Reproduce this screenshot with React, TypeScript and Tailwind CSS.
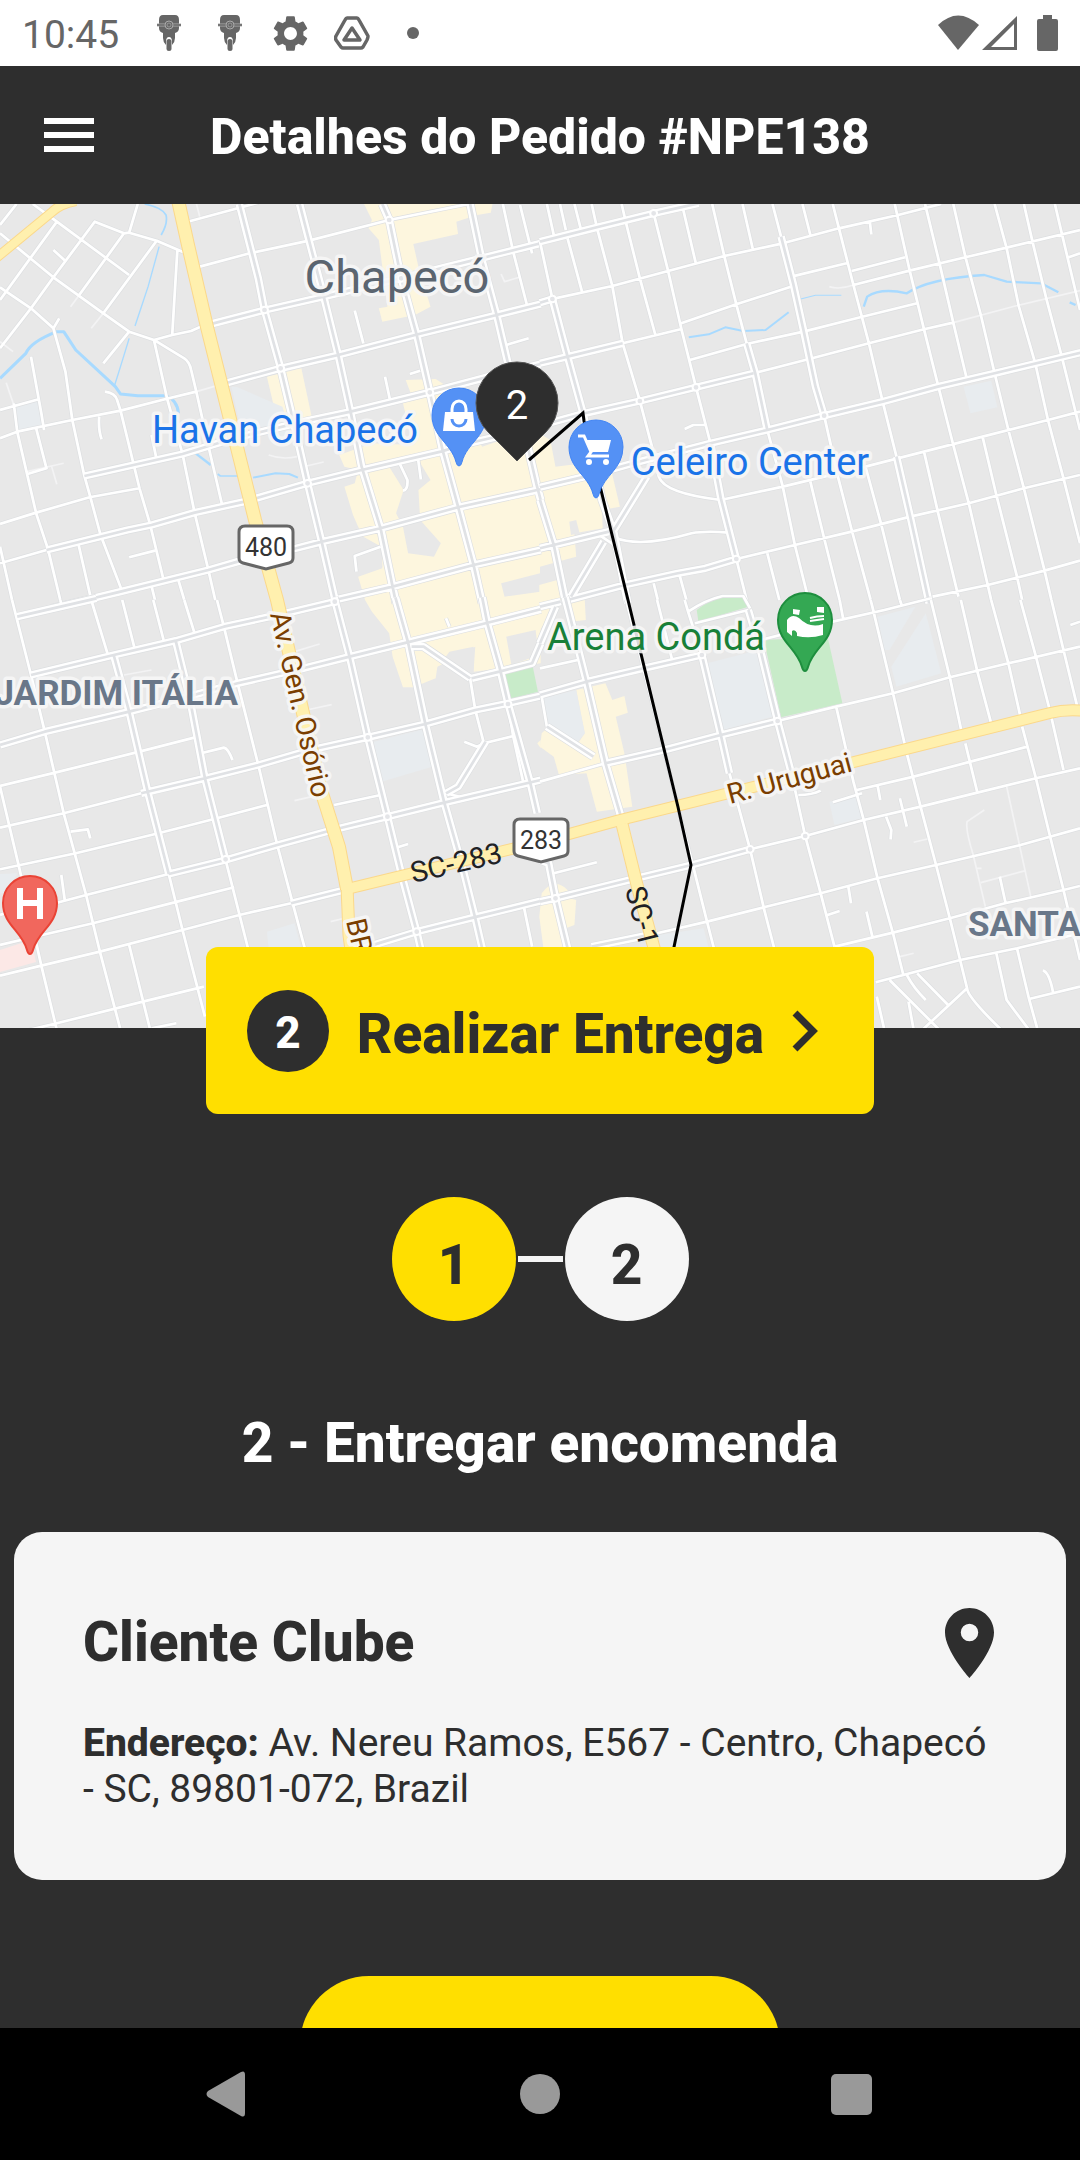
import React from "react";
import { MdSettings } from "react-icons/md";

type Tile = {
  transform: string;
  commercial: string[];
  holes: string[];
  blocks: string[];
  parks: string[];
  avenues: string[];
  streets: string[];
  faint: string[];
  rivers: { d: string; w: number }[];
  rings: [number, number][];
};

const tiles: Tile[] = [
  {
    transform: "translate(0 200) scale(0.3444 0.3333)",
    commercial: [
      "M1057 12H1430L1425 38 1385 45 1325 65 1330 102 1200 132 1215 200 1250 320 1205 345 1110 365 1100 325 1125 320 1100 120 1070 85 1080 60Z",
      "M775 530L875 505 905 650 830 665 800 640Z",
      "M1178 540L1265 537 1300 560 1400 740 1568 680V1200H1060L1040 1130 1110 1105V1042L1055 1010 1040 980 1025 945 1000 860 1030 850 1040 810 1000 800 985 765 1080 730 1200 735 1170 610 1200 600Z",
    ],
    holes: [
      "M1130 800L1215 780 1250 840 1215 870 1220 960 1280 1030 1260 1070 1185 1060 1170 980 1150 940 1172 870Z",
      "M1455 1150L1568 1120V1175L1465 1190Z",
      "M1040 1065L1105 1045 1110 1100 1040 1115Z",
    ],
    blocks: ["M672 560L690 562 820 620 850 720 700 690Z", "M45 618L115 600 122 675 52 692Z"],
    parks: [],
    avenues: [
      "M695 12L750 235 768 330 815 505 860 700 893 850 935 1030 975 1210",
      "M870 12L897 120 940 290 982 465 1018 635 1050 800 1105 985 1140 1160 1150 1210",
      "M1110 12L1130 60 1165 235 1210 405 1248 577 1285 750 1330 920 1375 1095 1400 1210",
      "M1365 12L1398 175 1442 345 1475 490 1510 640 1557 850 1570 900",
      "M583 380L770 330 940 290 1165 235 1300 200 1570 130",
      "M625 558L815 505 982 465 1205 405 1442 345 1570 312",
      "M245 828L530 762 680 715 880 665 1018 635 1248 577 1420 530 1570 492",
      "M135 1050L370 990 440 975 565 938 710 905 893 850 1050 810 1280 755 1360 730 1570 680",
      "M150 1225L350 1175 605 1110 690 1085 860 1045 935 1025 1105 985 1330 922 1570 868",
      "M972 1200L1140 1160 1375 1095 1570 1050",
    ],
    streets: [
      "M95 12L165 65 375 225", "M0 100L155 232 300 340 375 395 447 420 500 405 555 393 583 380",
      "M0 262L90 325 155 385 190 515 210 660 245 828 262 890 292 1005 355 1175",
      "M48 12L0 75", "M165 65L0 300", "M400 12L375 98", "M540 160L455 122 375 98 360 100 275 65 155 232 90 325 0 445",
      "M360 100L230 285", "M455 122L300 340", "M375 395L300 490", "M155 150L190 183", "M172 355L155 385",
      "M515 150L500 405", "M447 420L485 595 530 762 565 938 605 1110 625 1200", "M447 420L535 475Q550 485 555 510L570 575 610 760 645 915",
      "M0 630L115 597", "M90 470L120 640 128 690", "M0 715L50 695 210 660 350 632 490 595 570 575", "M40 610L50 695 105 940 140 1050 175 1200",
      "M105 685L135 805 80 822", "M0 972L105 938 260 892 405 865", "M350 632L405 865 435 970 475 1140", "M305 575Q335 580 340 600L350 632",
      "M288 650Q285 690 295 718", "M225 1020L265 1200", "M438 1150L450 1200", "M515 1130L535 1200", "M375 1072L450 1052",
      "M0 1090L135 1050", "M0 1040L35 1200", "M545 65L690 25 750 8", "M580 200L725 160 897 122 1130 60 1370 10",
      "M1030 332L1055 430", "M1118 530L1132 598", "M1190 522L1220 512", "M1460 12L1490 155 1530 315", "M1470 435L1535 415",
      "M1510 15L1545 160", "M1160 790L1183 840Q1185 870 1170 872", "M1213 770L1222 838", "M1035 1115L1030 1068 1105 1040", "M440 705L455 780",
      "M1398 175L1568 130",
    ],
    faint: ["M570 10L580 50", "M230 285L205 320", "M300 340L265 385", "M18 548L40 615", "M570 575L630 557", "M780 765Q820 780 862 770", "M890 798L940 786", "M78 815L185 790", "M150 800L165 853", "M1455 222L1465 245 1508 232", "M0 425L38 455"],
    rivers: [
      { d: "M420 12Q470 22 482 45Q488 70 468 105", w: 5 },
      { d: "M462 140L430 260 392 378", w: 4 },
      { d: "M375 415Q350 500 333 555", w: 4 },
      { d: "M0 535L75 460Q90 425 165 395L185 395 220 450 335 560 350 582 400 587 480 587Q515 600 518 640", w: 9 },
      { d: "M568 760L612 795", w: 7 },
      { d: "M632 822L640 828H690", w: 5 },
      { d: "M735 833L800 820 840 822 865 833", w: 6 },
    ],
    rings: [[1130, 60], [768, 330], [815, 505], [1248, 577], [893, 850], [1165, 235]],
  },
  {
    transform: "translate(540 200) scale(0.3444 0.3333)",
    commercial: [
      "M-2 700L30 720 45 800 200 780 232 920 180 930 182 985 100 1000 105 1070 70 1080 0 1100Z",
      "M-2 1155L50 1140 62 1200H-2Z",
    ],
    holes: ["M85 965L105 960 115 1000 90 1005Z"],
    blocks: ["M1230 560L1310 542 1328 622 1250 640Z"],
    parks: [],
    avenues: [
      "M36 297L80 470 125 640 180 900 215 1000 245 1160 255 1210",
      "M0 125L165 82 330 40 460 10",
      "M0 308L36 297", "M0 490L80 470 240 430", "M-5 678L130 640 290 603 453 562 620 520",
      "M0 862L130 830 270 790 495 730 660 690 825 647 995 605 1155 560 1320 520 1570 458",
      "M0 1045L200 995", "M80 1200L245 1155 400 1120 480 1105 570 1077",
      "M700 110L735 250 765 390 800 560 825 647", "M600 430L625 520 660 690", "M1035 770L1075 950 1130 1210",
      "M495 730L525 895 570 1077", "M0 900L40 1035 75 1210", "M310 830L215 990", "M185 1025L90 1190",
    ],
    streets: [
      "M0 305L210 258 372 213 535 168 705 130 868 85 1040 45 1165 12", "M240 430L408 388", "M620 520L790 475 955 430 1115 388 1200 368",
      "M570 1077L740 1035 905 995 1075 950 1245 910 1405 865 1568 825", "M525 900L705 860 945 800 1115 755 1285 710 1475 660 1568 635",
      "M1140 1190L1300 1155 1465 1112 1568 1082", "M20 12L40 105", "M58 12L75 90", "M100 12L118 85", "M80 115L122 275",
      "M150 12L165 82 210 258 240 430 290 603 325 740 345 830", "M237 12L250 70 290 235 335 405", "M330 40L372 213 410 385 453 562 495 730",
      "M412 12L452 188", "M500 12L535 168 570 313 600 430", "M588 12L618 148", "M675 12L705 130", "M762 12L785 105",
      "M850 12L868 85 910 255 955 430 995 605 1035 770", "M1030 12L1073 210 1115 388 1158 565 1200 735 1245 910 1300 1155 1310 1200",
      "M1118 12L1160 190 1200 368 1240 540", "M1200 12L1235 170 1280 345 1320 520 1360 690 1405 865 1465 1112 1485 1200",
      "M1320 12L1355 145 1390 318 1438 490 1475 660 1520 835 1568 1030", "M1405 12L1430 125 1470 295 1515 470 1568 690", "M1495 12L1515 100 1568 330",
      "M0 125L36 297", "M660 690L705 860 740 1035 780 1200", "M785 845L825 1015 870 1200", "M945 800L990 970 1045 1200", "M1115 755L1155 935 1215 1190",
      "M1285 710L1325 885 1385 1130 1400 1200", "M825 647L865 830 905 990 960 1200", "M410 370L570 313 735 258", "M435 480L600 432 765 395 930 352 1095 310",
      "M730 230L890 190", "M905 213L1060 172", "M910 255L1073 212 1235 172 1355 143 1568 90", "M1535 172L1568 160", "M958 68L962 103",
      "M420 687L445 675 480 675", "M345 830Q360 880 525 900", "M215 1012Q290 1045 440 1000Q480 992 548 998", "M165 1000L215 1035", "M660 1060L695 1200",
      "M405 1125L425 1200", "M330 1150L342 1200", "M570 1077L600 1200",
    ],
    faint: ["M1200 368L1380 318 1568 272", "M840 260Q870 270 910 255"],
    rivers: [
      { d: "M432 412L490 403 538 382 590 393 655 390 722 337", w: 6 },
      { d: "M757 297L800 286 875 286", w: 3 },
      { d: "M940 320L950 290Q990 262 1065 280Q1130 235 1290 225L1355 245 1455 250 1505 277", w: 7 },
      { d: "M1538 307L1555 315", w: 7 },
    ],
    rings: [[36, 297], [330, 40], [290, 603], [453, 562], [825, 647], [570, 1077]],
  },
  {
    transform: "translate(0 600) scale(0.3444 0.3333)",
    commercial: ["M1060 0H1570V190L1375 215 1380 140 1270 200 1265 235 1200 262H1170L1140 170 1130 100 1080 35Z", "M1560 430L1570 420V445Z"],
    holes: ["M1280 190L1305 155 1375 140V215L1350 220Z", "M1470 110L1555 90 1565 165 1485 195Z"],
    blocks: ["M1085 425L1230 388 1255 500 1108 545Z", "M775 995L855 970 875 1045H780Z", "M0 822L50 820 20 880H0Z"],
    parks: ["M1465 210L1545 190 1562 275 1480 298Z"],
    avenues: [
      "M50 50L280 -5", "M90 225L330 165 510 122 650 80 850 35 972 5", "M0 435L130 395 375 335 545 290 690 250 880 205 1015 170 1180 128 1410 70 1570 28",
      "M410 580L595 535 750 495 900 450 1068 412 1235 372 1380 330 1475 310 1570 288", "M490 822L655 780 805 735 965 690 1125 650 1290 608 1570 540",
      "M845 910L1000 870", "M1020 1055L1210 995 1385 950 1570 903", "M970 -8L1015 170 1068 412 1125 650 1165 820 1210 995 1240 1130",
      "M1148 -8L1185 128 1235 372 1290 608 1345 810 1380 955 1400 1045", "M1400 -8L1415 70 1450 200 1475 310 1540 550 1560 640",
      "M330 165L375 335 430 580 490 822", "M510 122L550 290 595 535 655 780", "M1370 235L1450 215 1545 190 1570 130", "M1195 140L1230 140 1365 235",
      "M1410 425L1330 560 1295 580",
    ],
    streets: [
      "M35 0L90 225 130 395 185 640 250 885 290 1055 350 1290", "M0 558L160 518 405 455 575 410", "M0 683L185 640 410 580",
      "M0 808L220 760 460 700 630 655 775 615", "M160 910L250 885 490 822", "M0 945L30 935", "M0 1035L110 1008 270 970 515 905 680 862",
      "M0 1127L120 1097 290 1055 530 990 695 945 845 910", "M0 1310L165 1270 415 1205 592 1160", "M440 1285L512 1270", "M0 560L55 800 120 1097 165 1290",
      "M265 0L312 160", "M355 0L392 150", "M445 0L475 120", "M535 0L565 100", "M175 0L180 20", "M630 0L650 80 690 250 750 495 805 735 850 910 885 1045",
      "M490 822L530 990 595 1250", "M655 780L665 820 720 1045", "M375 1035L435 1285", "M178 825L188 900", "M205 695L255 688 262 715",
      "M575 462L650 443Q662 445 675 480", "M970 615L1105 585", "M1155 742L1185 732", "M1365 235L1380 330 1405 430 1385 440 1348 425",
      "M1405 430L1490 408", "M1475 310L1490 408 1520 550", "M1295 55L1305 80", "M1520 915L1545 1040", "M1295 580L1340 592",
    ],
    faint: ["M855 155L928 132", "M890 330L963 314", "M855 602L905 590", "M960 965L1000 955", "M360 225L440 210"],
    rivers: [],
    rings: [[1068, 412], [655, 778], [1125, 650], [1210, 995], [1475, 312], [972, 5]],
  },
  {
    transform: "translate(540 600) scale(0.3444 0.3333)",
    commercial: [
      "M105 270L190 250 210 300 245 288 255 338 220 350 245 460 268 620 165 635 135 520 55 525 40 470 0 440 5 400 20 385 110 430 130 400Z",
      "M75 0H130L133 60 85 65Z", "M0 0H60L0 90Z", "M5 880Q40 830 80 870L85 895 105 900 100 975 75 985 90 1045H10L-2 950Z",
    ],
    holes: [],
    blocks: [
      "M10 295L105 270 130 400 110 425 20 370Z", "M485 190L635 150 675 350 530 390Z", "M980 50L1090 20 1015 150 1000 150Z",
      "M1120 40L1165 220 1035 260 1020 200Z", "M840 605L920 590 935 655 855 675Z", "M345 1005L475 985 490 1045H350Z",
    ],
    parks: ["M455 30Q490 0 540 -10L595 -5 605 20 460 65Z", "M650 120L835 110 878 310 700 352Z"],
    avenues: [
      "M0 20L60 5", "M0 285L135 245 300 205 470 165", "M190 490L360 450 525 405 690 363", "M45 895L280 835 440 795 610 748",
      "M73 -8L135 245 190 490 235 650", "M470 165L525 405 550 520", "M605 30L640 150 690 363 730 520", "M45 895L80 1045", "M0 780L25 790 45 895",
      "M20 380L155 470", "M0 905L45 895", "M150 1040L340 1000", "M45 20L0 130",
    ],
    streets: [
      "M0 545L190 490", "M690 363L860 320 1025 280 1190 232 1360 190 1568 140", "M610 748L770 708 940 660 1105 620 1270 578 1440 535 1568 505",
      "M550 520L610 748 650 925 680 1045", "M730 520L770 708 815 880 855 1040", "M860 320L910 545 940 660 980 835 1025 1000 1055 1125",
      "M965 20L1025 280 1065 460 1105 620 1150 795 1190 955 1240 1165Q1240 1190 1340 1290", "M1135 0L1190 232 1225 400", "M1235 430L1270 578",
      "M1222 0L1270 215 1310 370", "M1310 0L1360 190 1395 350", "M1400 380L1440 535 1480 705 1520 870 1568 1080", "M1395 0L1440 170 1480 330 1520 510",
      "M1485 0L1520 150 1560 320", "M400 620L445 800 485 965 505 1045", "M250 0L300 205 360 450 400 620", "M340 1000L485 965 650 922 815 880 980 835 1150 795 1395 735 1568 685",
      "M855 1040L1025 998 1190 955 1350 910 1520 870 1568 858", "M975 1147L1055 1125 1220 1080 1385 1045 1568 1000", "M920 570L1085 530 1250 485 1415 440",
      "M640 120L850 65 1000 30 1135 -5", "M1420 1197L1568 1160", "M1385 1045L1420 1197 1445 1290", "M1325 1060L1355 1200 1420 1290", "M1240 1165L1110 1290",
      "M1015 1140L1160 1290", "M1065 1125Q1085 1165 1120 1200", "M1095 1120L1185 1215", "M1070 1205L1085 1290", "M978 1190L1000 1290", "M1460 1112Q1478 1115 1490 1178",
      "M980 555L988 600", "M1045 595L1065 680", "M1005 650L1020 690 1018 718", "M895 858L903 910", "M948 935L965 1010", "M835 945L870 933", "M850 607L935 580",
      "M1335 830L1352 910", "M40 820L165 787", "M0 205L110 180", "M340 0L385 185", "M420 0L430 35 470 165", "M430 35Q480 0 530 -12H590L610 25", "M450 70L605 30",
      "M870 0L880 55", "M960 0L965 20", "M1540 75L1568 65", "M1045 0L1050 15", "M750 585Q790 585 815 572", "M5 290L20 380",
    ],
    faint: ["M1290 630L1240 665Q1235 690 1258 765L1293 920", "M1355 560L1425 890", "M1280 848L1410 812", "M1085 727L1125 717", "M1045 1070L1085 1060", "M1265 805H1282"],
    rivers: [],
    rings: [[470, 165], [690, 363], [770, 708], [45, 895], [610, 748]],
  },
];

const highways = [
  { d: "M-5 259L52 212Q60 204 76 201", w: 8 },
  { d: "M178 200L188 245 207 327 227 407 255 520 277 600 300 700 320 787 339 847 347 889", w: 12 },
  { d: "M347 886L349 935 362 1035", w: 11 },
  { d: "M347 889L413 873 540 842 620 820 850 763 1050 713Q1066 709 1085 711", w: 10 },
  { d: "M622 824L637 885 660 970", w: 11 },
];

function TileLand({ t }: { t: Tile }) {
  return (
    <g transform={t.transform}>
      {t.commercial.map((d) => <path key={d} d={d} fill="#fdf6de" />)}
      {t.holes.map((d) => <path key={d} d={d} fill="#e8e8e8" />)}
      {t.blocks.map((d) => <path key={d} d={d} fill="#e8ecef" />)}
      {t.parks.map((d) => <path key={d} d={d} fill="#c8ebc9" />)}
    </g>
  );
}

function TileRoads({ t }: { t: Tile }) {
  const streets = t.streets.join("");
  const avenues = t.avenues.join("");
  return (
    <g transform={t.transform} fill="none" strokeLinejoin="round">
      {t.rivers.map((r) => <path key={r.d} d={r.d} stroke="#a8daff" strokeWidth={r.w} />)}
      <path d={streets} stroke="#dddfe1" strokeWidth="12" />
      <path d={avenues} stroke="#dddfe1" strokeWidth="26" />
      <path d={t.faint.join("")} stroke="#f3f3f4" strokeWidth="5" />
      <path d={streets} stroke="#ffffff" strokeWidth="8" />
      <path d={avenues} stroke="#ffffff" strokeWidth="22" />
      <path d={avenues} stroke="#e0e2e5" strokeWidth="8" />
      {t.rings.map(([x, y]) => (
        <circle key={`${x}-${y}`} cx={x} cy={y} r="10" fill="#e4e5e8" stroke="#ffffff" strokeWidth="6" />
      ))}
    </g>
  );
}

const PIN = "M0 51Q-2 51-3 47C-8 28-27 22-27 0A27 27 0 0 1 27 0C27 22 8 28 3 47Q2 51 0 51Z";

function Shield({ x, y, label }: { x: number; y: number; label: string }) {
  return (
    <g transform={`translate(${x} ${y})`}>
      <path
        d="M-21-21H21Q27-21 27-15V11Q27 15 23 16L0 22-23 16Q-27 15-27 11V-15Q-27-21-21-21Z"
        fill="#ffffff" stroke="#666666" strokeWidth="3"
      />
      <text y="9" textAnchor="middle" fontSize="25" fill="#333333">{label}</text>
    </g>
  );
}

function CityMap() {
  return (
    <svg
      viewBox="0 204 1080 824"
      preserveAspectRatio="xMidYMid slice"
      className="block h-[824px] w-full"
      role="img"
      aria-label="Mapa de Chapecó"
      fontFamily="Roboto, sans-serif"
    >
      <rect y="200" width="1080" height="832" fill="#e8e8e8" />
      {tiles.map((t) => <TileLand key={t.transform} t={t} />)}
      <path d="M0 950L31 940 36 962 0 972Z" fill="#fce8e6" />
      {tiles.map((t) => <TileRoads key={t.transform} t={t} />)}
      <g fill="none" strokeLinejoin="round">
        {highways.map((h) => <path key={h.d} d={h.d} stroke="#fbd88b" strokeWidth={h.w + 2} />)}
        {highways.map((h) => <path key={h.d} d={h.d} stroke="#fff0ae" strokeWidth={h.w} />)}
      </g>
      <path d="M529 460L583 413 584 421 601 490 628 600 678 807 691 865 674 947 660 1030" fill="none" stroke="#000000" strokeWidth="3" />

      <g stroke="#f7f7f7" strokeOpacity="0.9" strokeWidth="7" strokeLinejoin="round" className="[paint-order:stroke]">
        <text x="397" y="293" textAnchor="middle" fontSize="47" fill="#5b6570">Chapecó</text>
        <text x="285" y="443" textAnchor="middle" fontSize="38" fill="#1a73e8">Havan Chapecó</text>
        <text x="750" y="475" textAnchor="middle" fontSize="38" fill="#1a73e8">Celeiro Center</text>
        <text x="656" y="650" textAnchor="middle" fontSize="38" fill="#188038">Arena Condá</text>
        <text x="238" y="705" textAnchor="end" fontSize="35" fontWeight="700" fill="#697789">JARDIM ITÁLIA</text>
        <text x="968" y="936" fontSize="35" fontWeight="700" fill="#697789">SANTA</text>
        <g fontSize="28" fill="#7a3e00">
          <text transform="translate(270 614) rotate(77)">Av. Gen. Osório</text>
          <text transform="translate(346 921) rotate(77)">BR</text>
          <text transform="translate(730 804) rotate(-15)">R. Uruguai</text>
        </g>
      </g>
      <g fontSize="29" fill="#202124">
        <text transform="translate(413 883) rotate(-13)">SC-283</text>
        <text transform="translate(625 889) rotate(76)">SC-1</text>
      </g>

      <Shield x={266} y={547} label="480" />
      <Shield x={541} y={840} label="283" />

      <g transform="translate(459 415)">
        <path d={PIN} fill="#5491f5" stroke="#4285f4" />
        <path d="M-14-3H14L16 16H-16Z" fill="#ffffff" />
        <path d="M-7-1V-6A7 8 0 0 1 7-6V-1" fill="none" stroke="#ffffff" strokeWidth="3" />
        <path d="M-7 4A7 7 0 0 0 7 4" fill="none" stroke="#5491f5" strokeWidth="3" />
      </g>
      <g transform="translate(596 447)">
        <path d={PIN} fill="#5491f5" stroke="#4285f4" />
        <path d="M-18-11H-12L-5 5-8 9H13" fill="none" stroke="#ffffff" strokeWidth="3" />
        <path d="M-11-7H15L12 5H-6Z" fill="#ffffff" />
        <circle cx="-7" cy="15" r="3" fill="#ffffff" />
        <circle cx="10" cy="15" r="3" fill="#ffffff" />
      </g>
      <g transform="translate(805 620)">
        <path d={PIN} fill="#34a853" stroke="#1e8e3e" strokeWidth="2" />
        <path d="M-18 0Q-13-7-6-2Q5 9 18 4V15Q5 19-8 16V13Q-10 9-13 11V16L-18 12Z" fill="#ffffff" />
        <path d="M-12-11L-5-10-6-5-12-6ZM12-13H19V-7L12-8Z" fill="#ffffff" />
        <path d="M5-2Q12-4 19-4M5 1Q12 0 19-1" fill="none" stroke="#ffffff" strokeWidth="2" />
      </g>
      <g transform="translate(30 903)">
        <path d={PIN} fill="#f1675d" stroke="#ea4335" strokeWidth="2" />
        <path d="M-10-15V16M10-15V16M-10 0H10" fill="none" stroke="#ffffff" strokeWidth="6" />
      </g>
      <g transform="translate(517 403)">
        <path d="M0 58L-29 29A41 41 0 1 1 29 29Z" fill="#2e2e2e" stroke="#555555" />
        <text y="16" textAnchor="middle" fontSize="40" fill="#ffffff">2</text>
      </g>
    </svg>
  );
}

function Scooter() {
  return (
    <svg viewBox="0 0 24 38" className="h-[38px] w-6" fill="#666666" aria-hidden="true">
      <path d="M6 1H18Q22 1 22 6V14Q22 18 18 19V24Q18 28 15 31V28Q15 23 12 23T9 28V31Q6 28 6 24V19Q2 18 2 14V6Q2 1 6 1Z" />
      <path d="M0 11H24" stroke="#aaaaaa" strokeWidth="3" />
      <path d="M0 11H24" stroke="#666666" strokeWidth="1.5" />
      <circle cx="12" cy="11" r="4" stroke="#aaaaaa" />
      <circle cx="12" cy="11" r="2" fill="none" stroke="#aaaaaa" strokeWidth="0.7" />
      <rect x="9.5" y="25" width="5" height="12" rx="2.5" />
    </svg>
  );
}

function StatusBar() {
  return (
    <div className="flex h-[66px] shrink-0 items-center bg-white px-[22px] text-[#666666]">
      <span className="w-[116px] pt-1 text-[39px] leading-none">10:45</span>
      <div className="grid grid-cols-[repeat(5,61px)] place-items-center">
        <Scooter />
        <Scooter />
        <MdSettings className="size-[43px]" />
        <svg viewBox="0 0 36 34" className="h-[34px] w-9" fill="none" stroke="#666666" strokeLinejoin="round" aria-hidden="true">
          <path d="M13 2H23Q24 2 25 4L34 20Q34 22 33 24L29 31Q28 32 27 32H9Q8 32 7 31L2 24Q1 22 2 20L11 4Q12 2 13 2Z" strokeWidth="3.5" />
          <path d="M18 12L26 24H10Z" strokeWidth="3.5" />
        </svg>
        <span className="size-3 rounded-full bg-[#666666]" />
      </div>
      <svg viewBox="0 0 120 36" className="ml-auto h-9 w-[120px]" fill="#666666" aria-hidden="true">
        <path d="M0 10Q20-9 41 10L20 35Z" />
        <path d="M79 1V35H44ZM76 9L53 32H76Z" fillRule="evenodd" />
        <path d="M105 0H114V4H118Q120 4 120 6V34Q120 36 118 36H101Q99 36 99 34V6Q99 4 101 4H105Z" />
      </svg>
    </div>
  );
}

export default function App() {
  return (
    <div className="flex h-screen flex-col overflow-hidden bg-[#2e2e2e] font-['Roboto',sans-serif]">
      <StatusBar />

      <header className="grid h-[138px] shrink-0 grid-cols-[1fr_auto_1fr] items-center bg-[#2e2e2e] px-11">
        <button type="button" aria-label="Abrir menu" className="flex w-[50px] flex-col gap-2">
          <span className="h-1.5 bg-white" />
          <span className="h-1.5 bg-white" />
          <span className="h-1.5 bg-white" />
        </button>
        <h1 className="pt-1 text-[50px] leading-none font-extrabold text-white">Detalhes do Pedido #NPE138</h1>
      </header>

      <main className="flex min-h-0 flex-1 flex-col items-center overflow-hidden">
        <div className="w-full shrink-0">
          <CityMap />
        </div>

        <button
          type="button"
          className="relative -mt-[81px] flex h-[167px] shrink-0 items-center gap-7 rounded-xl bg-[#ffdf00] pr-14 pl-[41px] text-[#2e2e2e]"
        >
          <span className="flex size-[82px] items-center justify-center rounded-full bg-[#2e2e2e] pt-1 text-[44px] font-extrabold text-white">2</span>
          <span className="pt-2 text-[55px] leading-none font-extrabold">Realizar Entrega</span>
          <svg viewBox="0 0 26 42" className="h-[42px] w-[26px]" fill="none" stroke="#2e2e2e" strokeWidth="7" aria-hidden="true">
            <path d="M3 3L21 21 3 39" />
          </svg>
        </button>

        <ol className="mt-[83px] flex shrink-0 items-center text-[55px] leading-none font-extrabold text-[#2e2e2e]">
          <li className="flex size-[124px] items-center justify-center rounded-full bg-[#ffdf00] pt-3">1</li>
          <li aria-hidden="true" className="mx-[2px] h-1.5 w-[45px] bg-[#f5f5f5]" />
          <li className="flex size-[124px] items-center justify-center rounded-full bg-[#f5f5f5] pt-3">2</li>
        </ol>

        <h2 className="mt-[90px] shrink-0 text-[55px] leading-[64px] font-extrabold text-white">2 - Entregar encomenda</h2>

        <div className="mt-[57px] w-full shrink-0 px-[14px]">
          <section className="rounded-[28px] bg-[#f5f5f5] pt-[76px] pr-[72px] pb-[68px] pl-[69px] text-[#2e2e2e]">
            <div className="flex items-start justify-between">
              <h3 className="text-[55px] leading-[68px] font-extrabold">Cliente Clube</h3>
              <svg viewBox="5 2 14 20" className="h-[70px] w-[49px]" fill="#2e2e2e" role="img" aria-label="Localização">
                <path d="M12 2C8.13 2 5 5.13 5 9c0 5.25 7 13 7 13s7-7.75 7-13c0-3.87-3.13-7-7-7zm0 9.5a2.5 2.5 0 0 1 0-5 2.5 2.5 0 0 1 0 5z" />
              </svg>
            </div>
            <p className="mt-[42px] text-[39px] leading-[46px]">
              <strong className="font-extrabold">Endereço:</strong> Av. Nereu Ramos, E567 - Centro, Chapecó - SC, 89801-072, Brazil
            </p>
          </section>
        </div>

        <button type="button" aria-label="Continuar" className="mt-24 h-[138px] w-[480px] shrink-0 rounded-full bg-[#ffdf00]" />
      </main>

      <nav aria-label="Sistema" className="grid h-[132px] shrink-0 grid-cols-[repeat(3,311px)] place-content-center place-items-center bg-black">
        <button type="button" aria-label="Voltar">
          <svg viewBox="0 0 46 46" className="size-[46px]" fill="#999999">
            <path d="M35 1Q39-1 39 4V42Q39 47 35 45L2 26Q-1 23 2 20Z" />
          </svg>
        </button>
        <button type="button" aria-label="Início" className="size-10 rounded-full bg-[#999999]" />
        <button type="button" aria-label="Recentes" className="size-[41px] rounded-[5px] bg-[#999999]" />
      </nav>
    </div>
  );
}
